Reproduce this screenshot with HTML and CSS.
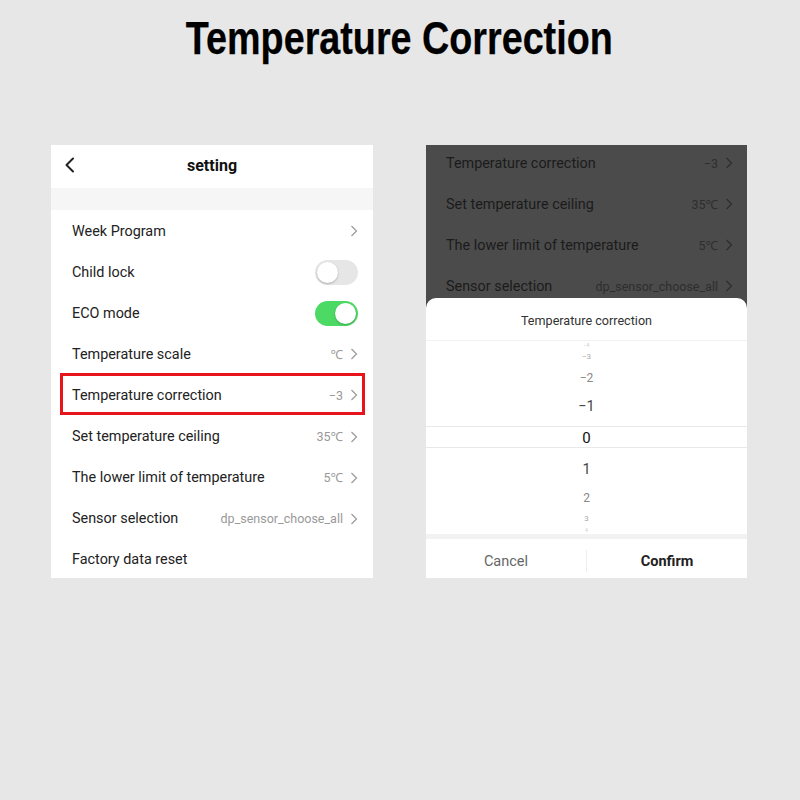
FILE: index.html
```html
<!DOCTYPE html>
<html>
<head>
<meta charset="utf-8">
<link rel="stylesheet" href="styles.css">
</head>
<body>
<div class="stage">
  <h1 class="title"><span>Temperature Correction</span></h1>
  <div class="panels">
    <div class="phone">
      <div class="header">
        <svg class="back" width="12" height="16" viewBox="0 0 12 16"><path d="M9 1.5 L2.5 8 L9 14.5" fill="none" stroke="#222" stroke-width="2" stroke-linecap="round" stroke-linejoin="round"/></svg>
        <span class="htitle">setting</span>
      </div>
      <div class="band"></div>
      <div class="list">
        <div class="row"><span class="label">Week Program</span><span class="right"><svg class="chev" width="8" height="12" viewBox="0 0 8 12"><path d="M1.5 1 L6.5 6 L1.5 11" fill="none" stroke="#999" stroke-width="1.2"/></svg></span></div>
        <div class="row"><span class="label">Child lock</span><span class="toggle"><span class="knob"></span></span></div>
        <div class="row"><span class="label">ECO mode</span><span class="toggle on"><span class="knob"></span></span></div>
        <div class="row"><span class="label">Temperature scale</span><span class="right"><span class="val">℃</span><svg class="chev" width="8" height="12" viewBox="0 0 8 12"><path d="M1.5 1 L6.5 6 L1.5 11" fill="none" stroke="#999" stroke-width="1.2"/></svg></span></div>
        <div class="row marked"><span class="label">Temperature correction</span><span class="right"><span class="val">−3</span><svg class="chev" width="8" height="12" viewBox="0 0 8 12"><path d="M1.5 1 L6.5 6 L1.5 11" fill="none" stroke="#999" stroke-width="1.2"/></svg></span></div>
        <div class="row"><span class="label">Set temperature ceiling</span><span class="right"><span class="val">35℃</span><svg class="chev" width="8" height="12" viewBox="0 0 8 12"><path d="M1.5 1 L6.5 6 L1.5 11" fill="none" stroke="#999" stroke-width="1.2"/></svg></span></div>
        <div class="row"><span class="label">The lower limit of temperature</span><span class="right"><span class="val">5℃</span><svg class="chev" width="8" height="12" viewBox="0 0 8 12"><path d="M1.5 1 L6.5 6 L1.5 11" fill="none" stroke="#999" stroke-width="1.2"/></svg></span></div>
        <div class="row"><span class="label">Sensor selection</span><span class="right"><span class="val">dp_sensor_choose_all</span><svg class="chev" width="8" height="12" viewBox="0 0 8 12"><path d="M1.5 1 L6.5 6 L1.5 11" fill="none" stroke="#999" stroke-width="1.2"/></svg></span></div>
        <div class="row"><span class="label">Factory data reset</span></div>
      </div>
    </div>

    <div class="phone dark">
      <div class="dimlist">
        <div class="list shifted">
          <div class="row"><span class="label">Temperature correction</span><span class="right"><span class="val">−3</span><svg class="chev" width="8" height="12" viewBox="0 0 8 12"><path d="M1.5 1 L6.5 6 L1.5 11" fill="none" stroke="#2e2e2e" stroke-width="1.2"/></svg></span></div>
          <div class="row"><span class="label">Set temperature ceiling</span><span class="right"><span class="val">35℃</span><svg class="chev" width="8" height="12" viewBox="0 0 8 12"><path d="M1.5 1 L6.5 6 L1.5 11" fill="none" stroke="#2e2e2e" stroke-width="1.2"/></svg></span></div>
          <div class="row"><span class="label">The lower limit of temperature</span><span class="right"><span class="val">5℃</span><svg class="chev" width="8" height="12" viewBox="0 0 8 12"><path d="M1.5 1 L6.5 6 L1.5 11" fill="none" stroke="#2e2e2e" stroke-width="1.2"/></svg></span></div>
          <div class="row"><span class="label">Sensor selection</span><span class="right"><span class="val">dp_sensor_choose_all</span><svg class="chev" width="8" height="12" viewBox="0 0 8 12"><path d="M1.5 1 L6.5 6 L1.5 11" fill="none" stroke="#2e2e2e" stroke-width="1.2"/></svg></span></div>
        </div>
      </div>
      <div class="sheet">
        <div class="stitle">Temperature correction</div>
        <div class="picker">
          <div class="pi p4">−4</div>
          <div class="pi p3">−3</div>
          <div class="pi p2">−2</div>
          <div class="pi p1 up">−1</div>
          <div class="pi p0">0</div>
          <div class="pi p1 down">1</div>
          <div class="pi p2">2</div>
          <div class="pi p3">3</div>
          <div class="pi p4 last">4</div>
        </div>
        <div class="sgap"></div>
        <div class="buttons">
          <div class="btn cancel">Cancel</div>
          <div class="divider"></div>
          <div class="btn confirm">Confirm</div>
        </div>
      </div>
    </div>
  </div>
</div>
</body>
</html>
```

FILE: styles.css
```css
* { box-sizing: border-box; }
html, body { margin: 0; padding: 0; }
body {
  background: #e6e7e6;
  font-family: Roboto, "Noto Sans", "DejaVu Sans", sans-serif;
  width: 800px;
  height: 800px;
  overflow: hidden;
}
.stage { width: 800px; }
.title {
  margin: 0;
  height: 76px;
  display: flex;
  align-items: center;
  justify-content: center;
  font-family: "Liberation Sans", Arial, sans-serif;
  font-weight: bold;
  font-size: 46px;
  color: #000;
}
.title span {
  display: inline-block;
  transform: scaleX(0.82);
  margin-left: -2px;
  -webkit-text-stroke: 0.25px #000;
}
.panels {
  margin-top: 69px;
  padding-left: 51px;
  display: flex;
  gap: 53px;
}
.phone {
  width: 322px;
  height: 433px;
  background: #fff;
  overflow: hidden;
  display: flex;
  flex-direction: column;
}
.phone.dark {
  width: 321px;
  background: #4b4b4b;
}
.header {
  height: 43px;
  flex: none;
  position: relative;
  display: flex;
  align-items: center;
  justify-content: center;
}
.back {
  position: absolute;
  left: 13px;
  top: 12px;
}
.htitle {
  font-weight: bold;
  font-size: 16px;
  color: #111;
  margin-top: -2px;
}
.band {
  height: 22px;
  flex: none;
  background: #f6f6f6;
}
.list { display: flex; flex-direction: column; flex: none; }
.row {
  height: 41.12px;
  flex: none;
  display: flex;
  align-items: center;
  justify-content: space-between;
  padding: 1px 15px 0 21px;
  position: relative;
}
.label {
  font-size: 14.4px;
  color: #222;
}
.right {
  display: flex;
  align-items: center;
  gap: 7px;
}
.val {
  font-size: 12.5px;
  color: #999;
}
.chev { display: block; }
.marked::after {
  content: "";
  position: absolute;
  left: 9px;
  right: 8px;
  top: -1px;
  bottom: 1px;
  border: 3px solid #e8141b;
}
.toggle {
  width: 43px;
  height: 25px;
  border-radius: 13px;
  background: #e6e6e6;
  position: relative;
}
.toggle .knob {
  position: absolute;
  top: 2px;
  left: 2px;
  width: 21px;
  height: 21px;
  border-radius: 50%;
  background: #fff;
  box-shadow: 0 1px 2px rgba(0,0,0,0.25);
}
.toggle.on { background: #4cd964; }
.toggle.on .knob { left: 20px; }

.dimlist {
  height: 153px;
  flex: none;
  overflow: hidden;
}
.shifted { margin-top: -3px; }
.dark .row { padding-left: 20px; padding-right: 14px; }
.dark .label { color: #1b1b1b; }
.dark .val { color: #2e2e2e; }

.sheet {
  flex: 1;
  background: #fff;
  border-radius: 10px 10px 0 0;
  display: flex;
  flex-direction: column;
}
.stitle {
  height: 43px;
  flex: none;
  display: flex;
  align-items: center;
  justify-content: center;
  padding-top: 2px;
  font-size: 12.6px;
  color: #333;
  border-bottom: 1px solid #f2f2f2;
}
.picker {
  flex: none;
  display: flex;
  flex-direction: column;
}
.pi {
  display: flex;
  align-items: center;
  justify-content: center;
  flex: none;
}
.p4 { height: 8px; font-size: 5px; color: #ccc; overflow: hidden; }
.p4.last { height: 9px; }
.p3 { height: 14px; font-size: 8px; color: #aaa; }
.p2 { height: 28px; font-size: 12px; color: #888; padding-top: 2px; }
.p1 { height: 35px; font-size: 14.5px; color: #444; }
.p1.up { padding-bottom: 5px; }
.p1.down { padding-top: 8px; }
.p0 {
  height: 22px;
  font-size: 15px;
  color: #111;
  padding-top: 1px;
  border-top: 1px solid #e8e8e8;
  border-bottom: 1px solid #e8e8e8;
}
.sgap {
  height: 5px;
  flex: none;
  background: #f2f2f2;
}
.buttons {
  flex: 1;
  display: flex;
  align-items: center;
  padding-top: 5px;
}
.btn {
  flex: 1;
  text-align: center;
  font-size: 14.5px;
}
.cancel { color: #666; }
.confirm { color: #222; font-weight: bold; }
.divider {
  width: 1px;
  height: 22px;
  background: #eeeeee;
}
```
